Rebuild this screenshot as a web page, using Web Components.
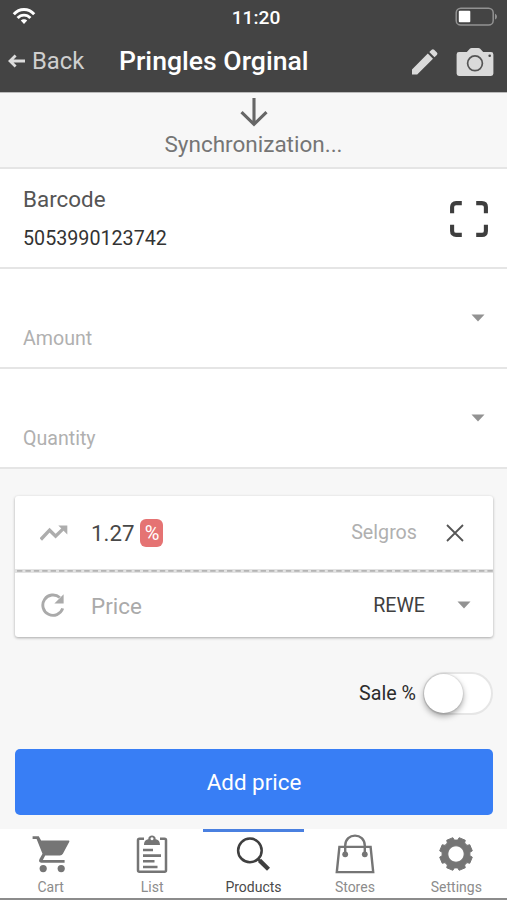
<!DOCTYPE html>
<html lang="en">
<head>
<meta charset="utf-8">
<title>Pringles Orginal</title>
<style>
html,body{margin:0;height:100%;background:#f7f7f7;font-family:Roboto,"Liberation Sans",sans-serif}
</style>
</head>
<body>
<product-page></product-page>
<script>
const define = (name, html, setup) => {
  const t = document.createElement('template');
  t.innerHTML = '<style>*{box-sizing:border-box}span{white-space:nowrap}</style>' + html;
  customElements.define(name, class extends HTMLElement {
    connectedCallback() {
      if (this.shadowRoot) return;
      this.attachShadow({ mode: 'open' }).append(t.content.cloneNode(true));
      if (setup) setup(this, this.shadowRoot);
    }
  });
};

const ICONS = {
  wifi: [24, 18, '<g fill="none" stroke="#fff" stroke-width="2.9"><path d="M1.8 7.2C7.4 .9 16.6 .9 22.2 7.2"/><path d="M5.6 11C9.2 7.1 14.8 7.1 18.4 11"/></g><path fill="#fff" d="M12 17l-3.2-3.4c1.6-1.9 4.8-1.9 6.4 0z"/>'],
  battery: [44, 20, '<rect x="1.2" y="1.2" width="37" height="16.8" rx="4.6" fill="none" stroke="#929292" stroke-width="1.5"/><rect x="3.8" y="3.8" width="11.5" height="11.5" rx="1" fill="#fff"/><path d="M40 6.7c2.6.8 2.6 5 0 5.8z" fill="#929292"/>'],
  back: [18, 16, '<path d="M17 8H2M7.6 2.4L2 8l5.6 5.6" fill="none" stroke="#dcdcdc" stroke-width="2.8"/>'],
  pencil: [28, 28, '<path fill="#dadada" d="M1 21.4L16.8 5.6l5.2 5.2L6.2 26.6H1zM18.3 4.1l2.4-2.4q1.2-1.1 2.4 0l2.8 2.8q1.2 1.2 0 2.4l-2.4 2.4z"/>'],
  camera: [38, 30, '<path fill="#dadada" d="M3 5h7.8l3-3.2Q14.6 1 15.6 1h6.8q1 0 1.8.8l3 3.2H35q2.4 0 2.4 2.4v19.2q0 2.4-2.4 2.4H3Q.6 29 .6 26.6V7.4Q.6 5 3 5z"/><circle cx="19" cy="16.3" r="7.4" fill="none" stroke="#555" stroke-width="1.7"/><circle cx="33.7" cy="8.8" r="1.3" fill="#444"/>'],
  down: [30, 30, '<path d="M15 1v26M2.5 15.2L15 27.4l12.5-12.2" fill="none" stroke="#666" stroke-width="3.1"/>'],
  scan: [38, 36, '<path d="M2.1 12.3V6.1q0-4 4-4h5.7M26.2 2.1h5.7q4 0 4 4v6.2M35.9 23.7v6.2q0 4-4 4h-5.7M11.8 33.9H6.1q-4 0-4-4v-6.2" fill="none" stroke="#3e3e3e" stroke-width="4.1"/>'],
  caret: [14, 8, '<path d="M.5.5h13L7 7.5z" fill="#929292"/>'],
  trend: [28, 16, '<path d="M.8 14.5L9.6 5.2l6 6 8-7.8" fill="none" stroke="#adadad" stroke-width="3.4"/><path d="M18.3.6h9v9z" fill="#adadad"/>'],
  refresh: [24, 24, '<path d="M21.7 15.4A10.2 10.2 0 1 1 18.8 4.5" fill="none" stroke="#aaa" stroke-width="2.9"/><path d="M22.6 1.2v9.2h-9.2z" fill="#aaa"/>'],
  close: [18, 18, '<path d="M1 1l16 16M17 1L1 17" stroke="#555" stroke-width="1.8" fill="none"/>'],
  cart: [38, 38, '<path fill="#757575" d="M.6 1.2h6.2l2.3 4.2h27.8q.8.3.4 1.3l-6.4 12.1q-1 1.8-3 1.8H13.2l-2.3 4.5h21.7v2.7H9.2q-3.2-.5-1.7-3.8l3-5.3L4.6 4.1H.6z"/><circle cx="11.2" cy="33.6" r="3.6" fill="#757575"/><circle cx="29.2" cy="33.6" r="3.6" fill="#757575"/>'],
  list: [32, 40, '<path d="M8 4.7H3.5Q2 4.7 2 6.2v30q0 1.5 1.5 1.5h25q1.5 0 1.5-1.5v-30q0-1.5-1.5-1.5H24" fill="none" stroke="#757575" stroke-width="2.5"/><path fill="#757575" fill-rule="evenodd" d="M12.3 5.2C12 .2 20 .2 19.7 5.2c3.2.5 4.3 2.8 4.3 5.8H8c0-3 1.1-5.3 4.3-5.8zM16 3.3a1.5 1.5 0 1 0 .01 0z"/><path d="M7 16h10M7 21.6h18M7 27.3h11.5M7 33h14.5" stroke="#757575" stroke-width="2.6" fill="none"/>'],
  search: [38, 36, '<circle cx="15.9" cy="14.4" r="11.8" fill="none" stroke="#3f3f3f" stroke-width="2.5"/><path d="M23.8 22.8l2 2" stroke="#3f3f3f" stroke-width="2.5"/><path d="M25.5 24.4l9 8.8" stroke="#3f3f3f" stroke-width="4.3"/>'],
  bag: [40, 40, '<g fill="none" stroke="#757575" stroke-width="2.4"><path d="M4.4 12.9h31.2l2.6 25.2H1.8z"/><path d="M10.2 20v-8.2c0-13.6 19.6-13.6 19.6 0V20"/></g><circle cx="10.2" cy="20.3" r="2.9" fill="#757575"/><circle cx="29.8" cy="20.3" r="2.9" fill="#757575"/>'],
  gear: [36, 36, '']
};
(() => {
  const pts = [];
  for (let i = 0; i < 8; i++) {
    const c = i * 45 + 22.5;
    for (const [a, r] of [[-15.5, 14], [-11.5, 16.6], [11.5, 16.6], [15.5, 14]]) {
      const q = (c + a) * Math.PI / 180;
      pts.push((18 + r * Math.cos(q)).toFixed(2) + ' ' + (18 + r * Math.sin(q)).toFixed(2));
    }
  }
  ICONS.gear[2] = `<path fill="#757575" stroke="#757575" stroke-linejoin="round" fill-rule="evenodd" d="M${pts.join('L')}ZM18 9.8a8.2 8.2 0 1 0 .01 0z"/>`;
})();

define('app-icon', '<style>:host{display:block;flex:none}svg{display:block}</style>', (h, r) => {
  const [w, ht, body] = ICONS[h.getAttribute('name')];
  r.innerHTML += `<svg width="${w}" height="${ht}" viewBox="0 0 ${w} ${ht}">${body}</svg>`;
});

define('status-bar', `<style>:host{display:grid;grid-template-columns:1fr auto 1fr;height:34px;color:#fff;padding:0 8px 0 12px}
span{font-size:19.2px;font-weight:500;line-height:35px;padding-left:1px}.w{margin-top:7px}.b{justify-self:end;margin:7px 0 0}</style>
<app-icon class="w" name="wifi"></app-icon><span>11:20</span><app-icon class="b" name="battery"></app-icon>`);

define('nav-bar', `<style>:host{display:flex;height:58px;padding:0 13px 0 8px;color:#fff}
.a{margin-top:19px}.k{font-size:23.8px;line-height:55px;color:#cfcfcf;margin-left:6px;width:87px}
.t{font-size:26.6px;font-weight:500;line-height:54px;flex:1}.p{margin:14px 17px 0 0}.c{margin-top:13px}</style>
<app-icon class="a" name="back"></app-icon><span class="k">Back</span><span class="t"><slot></slot></span>
<app-icon class="p" name="pencil"></app-icon><app-icon class="c" name="camera"></app-icon>`);

define('sync-banner', `<style>:host{display:flex;flex-direction:column;align-items:center;height:77px;padding-top:4px;background:#f7f7f7;border-top:1px solid #bbb;border-bottom:2px solid #e5e5e5;color:#757575}
span{font-size:22.5px;line-height:30px;margin-top:4px}app-icon{height:28px}</style>
<app-icon name="down"></app-icon><span><slot></slot></span>`);

define('barcode-row', `<style>:host{display:flex;justify-content:space-between;height:100px;background:#fff;border-bottom:2px solid #e5e5e5;padding:0 19px 0 23px}
div{display:flex;flex-direction:column;padding-top:15px}.l{font-size:22.4px;line-height:30px;color:#555}.v{font-size:19.7px;line-height:30px;margin-top:10px;color:#333}app-icon{margin-top:32px}</style>
<div><span class="l">Barcode</span><span class="v"><slot></slot></span></div><app-icon name="scan"></app-icon>`);

define('select-row', `<style>:host{display:flex;justify-content:space-between;height:100px;background:#fff;border-bottom:2px solid #e5e5e5;padding:0 22px 0 23px}
span{font-size:19.6px;line-height:30px;margin-top:55px;color:#b0b0b0}app-icon{margin-top:45px}</style>
<span><slot></slot></span><app-icon name="caret"></app-icon>`);

define('price-card', `<style>:host{display:block;height:141px;margin:27px 14px 0 15px;background:#fff;border-radius:3px;box-shadow:0 1px 3px rgba(0,0,0,.32)}
.r{display:flex;align-items:center}.one{height:73px;padding:0 29px 0 25px}.two{height:64px;padding:0 22px 0 26px}
svg{display:block}.n{font-size:22.3px;color:#484848;margin-left:23px}
.pc{width:23px;height:28px;border-radius:6px;background:#e57373;color:#fff;font-size:20px;line-height:28px;text-align:center;margin-left:6px}
.s{font-size:19.7px;color:#b0b0b0;margin-left:auto;margin-right:29px}
.p{font-size:22.4px;color:#aaa;margin-left:26px;margin-top:1px}.w{font-size:19.6px;color:#404040;margin-left:auto;margin-right:32px}</style>
<div class="r one"><app-icon name="trend"></app-icon><span class="n">1.27</span><span class="pc">%</span><span class="s">Selgros</span><app-icon name="close"></app-icon></div>
<svg width="478" height="4"><path d="M0 2h478" stroke="#e2e2e2" stroke-width="4"/><path d="M2 1.8h476" stroke="#b4b4b4" stroke-width="1.8" stroke-dasharray="5.4 3"/></svg>
<div class="r two"><app-icon name="refresh"></app-icon><span class="p">Price</span><span class="w">REWE</span><app-icon name="caret"></app-icon></div>`);

define('sale-toggle', `<style>:host{display:flex;justify-content:flex-end;align-items:center;height:44px;margin-top:34px;padding-right:14px}
span{font-size:19.7px;color:#2c2c2c;margin-right:7px}.t{width:70px;height:43px;border-radius:22px;background:#fff;border:2px solid #e6e6e6}
i{display:block;width:39px;height:39px;margin-left:-1px;border-radius:50%;background:#fff;box-shadow:0 3px 6px rgba(0,0,0,.36),0 0 2px rgba(0,0,0,.2)}</style>
<span><slot></slot></span><div class="t"><i></i></div>`);

define('primary-button', `<style>:host{display:block;margin:34px 14px 0 15px}button{display:block;width:100%;height:66px;border:0;border-radius:5px;background:#387ef5;color:#fff;font:22.4px/66px Roboto,"Liberation Sans",sans-serif;padding:0}</style>
<button><slot></slot></button>`);

define('tab-item', `<style>:host{display:flex;flex-direction:column;align-items:center;border-top:3px solid transparent;color:#8c8c8c}
:host([active]){border-color:#4a80e0;color:#4a4a4a}div{height:43px;display:flex;align-items:center}
span{font-size:14px;line-height:20px;margin-top:2px}</style><div></div><span><slot></slot></span>`, (h, r) => {
  const i = document.createElement('app-icon');
  i.setAttribute('name', h.getAttribute('icon'));
  r.querySelector('div').append(i);
});

define('tab-bar', `<style>:host{display:grid;grid-template-columns:repeat(5,1fr);height:71px;background:#fff;margin-top:auto;border-bottom:2px solid #8c8c8c}</style><slot></slot>`);

define('product-page', `<style>:host{display:flex;flex-direction:column;width:507px;height:900px;overflow:hidden;background:#f7f7f7}header{background:#444}</style>
<header><status-bar></status-bar><nav-bar>Pringles Orginal</nav-bar></header>
<sync-banner>Synchronization...</sync-banner>
<barcode-row>5053990123742</barcode-row>
<select-row>Amount</select-row>
<select-row>Quantity</select-row>
<price-card></price-card>
<sale-toggle>Sale %</sale-toggle>
<primary-button>Add price</primary-button>
<tab-bar><tab-item icon="cart">Cart</tab-item><tab-item icon="list">List</tab-item><tab-item icon="search" active>Products</tab-item><tab-item icon="bag">Stores</tab-item><tab-item icon="gear">Settings</tab-item></tab-bar>`);
</script>
</body>
</html>
